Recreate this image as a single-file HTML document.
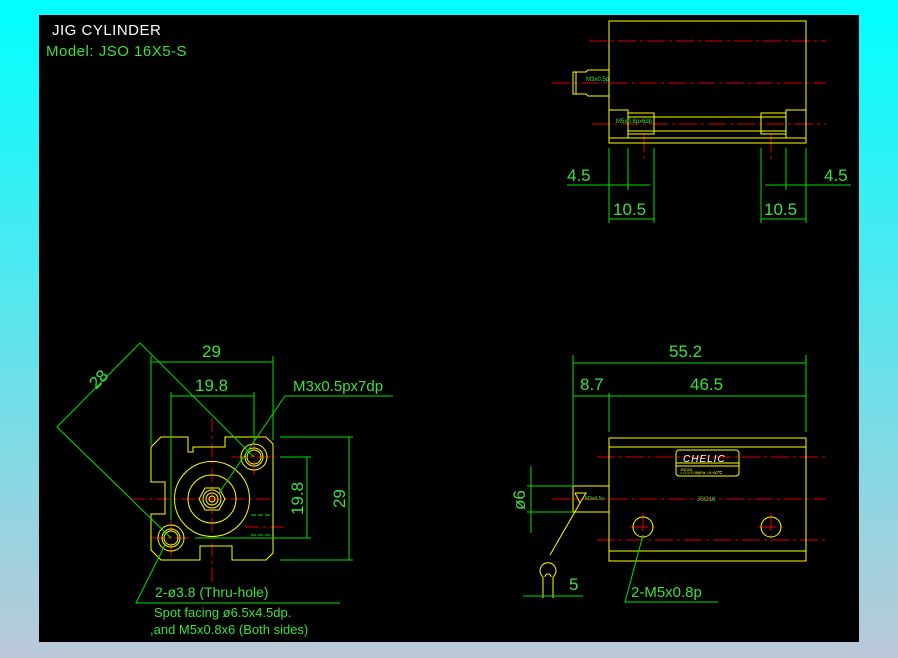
<!DOCTYPE html>
<html><head><meta charset="utf-8"><style>
html,body{margin:0;padding:0;width:898px;height:658px;overflow:hidden;background:linear-gradient(#00ffff,#bcc8d8);}
svg{position:absolute;left:0;top:0}
text{font-family:"Liberation Sans",sans-serif;}
</style></head><body>
<svg width="898" height="658" viewBox="0 0 898 658">
<rect x="39" y="15" width="820" height="627" fill="#000"/>
<text x="52" y="35" fill="#fff" font-size="15" letter-spacing="0.5">JIG  CYLINDER</text>
<text x="46" y="56" fill="#3ee03e" font-size="15" letter-spacing="0.5">Model:  JSO  16X5-S</text>

<g fill="none" stroke-width="1">
<!-- TOP VIEW -->
<g stroke="#e00000" stroke-dasharray="18,4,3,4">
<line x1="589" y1="41" x2="826" y2="41"/><line x1="552" y1="83" x2="826" y2="83"/><line x1="592" y1="124" x2="826" y2="124"/>
<line x1="644" y1="134" x2="644" y2="162"/><line x1="771" y1="134" x2="771" y2="162"/>
</g>
<g stroke="#ffff00">
<rect x="609" y="21" width="197" height="122"/>
<line x1="609" y1="138" x2="806" y2="138"/>
<polyline points="609,70 588,70 586,72 573,72 573,94 586,94 588,96 609,96"/>
<line x1="576" y1="72" x2="576" y2="94"/>
<rect x="609" y="110" width="19" height="28"/><rect x="628" y="113" width="26" height="21"/>
<line x1="628" y1="117" x2="654" y2="117"/><line x1="628" y1="131" x2="654" y2="131"/>
<line x1="654" y1="117" x2="761" y2="117"/><line x1="654" y1="131" x2="761" y2="131"/>
<rect x="786" y="110" width="20" height="28"/><rect x="761" y="113" width="25" height="21"/>
<line x1="761" y1="117" x2="786" y2="117"/><line x1="761" y1="131" x2="786" y2="131"/>
</g>
<g stroke="#00e000">
<line x1="609" y1="148" x2="609" y2="223"/><line x1="628" y1="148" x2="628" y2="190"/><line x1="654" y1="148" x2="654" y2="223"/>
<line x1="567" y1="185" x2="650" y2="185"/><line x1="609" y1="219" x2="654" y2="219"/>
<line x1="761" y1="148" x2="761" y2="223"/><line x1="786" y1="148" x2="786" y2="190"/><line x1="806" y1="148" x2="806" y2="223"/>
<line x1="765" y1="185" x2="851" y2="185"/><line x1="761" y1="219" x2="806" y2="219"/>
</g>
</g>
<text x="586" y="81" fill="#3ee03e" font-size="6">M3x0.5p</text>
<text x="616" y="123" fill="#3ee03e" font-size="6">M5x0.8px6dp</text>
<g fill="#3ee03e" font-size="17">
<text x="567" y="181">4.5</text><text x="824" y="181">4.5</text>
<text x="613" y="215">10.5</text><text x="764" y="215">10.5</text>
</g>

<!-- FRONT VIEW -->
<g fill="none">
<g stroke="#e00000" stroke-dasharray="14,4,3,4">
<line x1="131" y1="499" x2="270" y2="499"/><line x1="212" y1="418" x2="212" y2="582"/>
<line x1="232" y1="457" x2="276" y2="457"/><line x1="254" y1="436" x2="254" y2="478"/>
<line x1="150" y1="538" x2="193" y2="538"/><line x1="171" y1="518" x2="171" y2="560"/>
<line x1="245" y1="527" x2="285" y2="527"/>
</g>
<g stroke="#ffff00">
<polyline points="151,447 161,437 188,437 188,452 193,452 193,447 225,447 225,437 266,437 273,444 273,553 266,560 232,560 232,546 200,546 200,560 161,560 151,550 151,514 165,514 165,482 151,482 151,447"/>
<circle cx="212" cy="499" r="37.5"/><circle cx="212" cy="499" r="24"/>
<polygon points="205,488 219,488 225,499 219,510 205,510 199,499"/>
<circle cx="212" cy="499" r="9"/><circle cx="212" cy="499" r="6"/><circle cx="212" cy="499" r="3"/>
<circle cx="254" cy="457" r="13"/><circle cx="254" cy="457" r="9"/><circle cx="254" cy="457" r="7"/>
<circle cx="171" cy="538" r="13"/><circle cx="171" cy="538" r="9"/><circle cx="171" cy="538" r="7"/>
</g>
<g stroke="#00e000" stroke-dasharray="5,2">
<line x1="251" y1="515" x2="273" y2="515"/><line x1="251" y1="535" x2="273" y2="535"/>
</g>
<g stroke="#00e000">
<line x1="151" y1="356" x2="151" y2="445"/><line x1="273" y1="356" x2="273" y2="440"/>
<line x1="151" y1="362" x2="273" y2="362"/>
<line x1="171" y1="392" x2="171" y2="520"/><line x1="254" y1="392" x2="254" y2="440"/>
<line x1="171" y1="396" x2="254" y2="396"/>
<line x1="280" y1="437" x2="353" y2="437"/><line x1="280" y1="560" x2="353" y2="560"/>
<line x1="349" y1="437" x2="349" y2="560"/>
<line x1="280" y1="457" x2="311" y2="457"/><line x1="195" y1="538" x2="311" y2="538"/>
<line x1="307" y1="457" x2="307" y2="538"/>
<line x1="57" y1="427" x2="140" y2="343"/>
<line x1="140" y1="343" x2="254" y2="457"/><line x1="57" y1="427" x2="171" y2="538"/>
<polyline points="219,493 285,396 393,396"/>
<polyline points="165,545 136,603 340,603"/>
</g>
</g>
<g fill="#3ee03e" font-size="17">
<text x="202" y="357">29</text>
<text x="195" y="391">19.8</text>
<text x="293" y="391" font-size="15">M3x0.5px7dp</text>
<text transform="translate(303,515) rotate(-90)">19.8</text>
<text transform="translate(345,508) rotate(-90)">29</text>
<text transform="translate(96,390) rotate(-45)">28</text>
<text x="155" y="597" font-size="14">2-ø3.8 (Thru-hole)</text>
<text x="154" y="617" font-size="13">Spot facing  ø6.5x4.5dp.</text>
<text x="150" y="634" font-size="13">,and M5x0.8x6 (Both sides)</text>
</g>

<!-- SIDE VIEW -->
<g fill="none">
<g stroke="#e00000" stroke-dasharray="18,4,3,4">
<line x1="597" y1="457" x2="826" y2="457"/><line x1="552" y1="499" x2="826" y2="499"/><line x1="597" y1="540" x2="826" y2="540"/>
<line x1="630" y1="527" x2="656" y2="527"/><line x1="643" y1="513" x2="643" y2="541"/>
<line x1="758" y1="527" x2="784" y2="527"/><line x1="771" y1="513" x2="771" y2="541"/>
</g>
<g stroke="#ffff00">
<rect x="609" y="438" width="197" height="123"/>
<line x1="609" y1="447" x2="806" y2="447"/><line x1="609" y1="551" x2="806" y2="551"/>
<rect x="676" y="450" width="63" height="26" rx="3"/>
<line x1="676" y1="463" x2="739" y2="463"/><line x1="676" y1="466" x2="739" y2="466"/>
<rect x="573" y="486" width="36" height="26"/>
<polyline points="575,493 586,493 580,503 575,493"/>
<circle cx="643" cy="527" r="10"/><circle cx="771" cy="527" r="10"/>
<line x1="580" y1="503" x2="550" y2="555"/>
<path d="M543,577 A8,8 0 1 1 553,577 M545,577 A3,3 0 0 1 551,577"/>
<line x1="543" y1="577" x2="543" y2="598"/><line x1="553" y1="577" x2="553" y2="598"/>
</g>
<g stroke="#00e000">
<line x1="573" y1="355" x2="573" y2="486"/><line x1="806" y1="355" x2="806" y2="432"/><line x1="609" y1="393" x2="609" y2="432"/>
<line x1="573" y1="363" x2="806" y2="363"/><line x1="573" y1="396" x2="806" y2="396"/>
<line x1="527" y1="486" x2="573" y2="486"/><line x1="527" y1="512" x2="573" y2="512"/>
<line x1="531" y1="466" x2="531" y2="533"/>
<line x1="523" y1="596" x2="583" y2="596"/>
<polyline points="643,535 625,602 718,602"/>
</g>
</g>
<text x="683" y="462" fill="#fff" font-size="10" font-style="italic" letter-spacing="1">CHELIC</text>
<text x="680" y="471" fill="#ffff00" font-size="4">JSO16</text>
<text x="680" y="474" fill="#ffff00" font-size="4">○ 0.1~0.9MPa  ○0~60℃</text>
<text x="697" y="501" fill="#3ee03e" font-size="6">JSO16</text>
<text x="585" y="500" fill="#3ee03e" font-size="5">M3x0.5p</text>
<g fill="#3ee03e" font-size="17">
<text x="669" y="357">55.2</text>
<text x="580" y="390">8.7</text>
<text x="690" y="390">46.5</text>
<text transform="translate(525,510) rotate(-90)">ø6</text>
<text x="569" y="590">5</text>
<text x="631" y="597" font-size="15">2-M5x0.8p</text>
</g>
</svg>
</body></html>
